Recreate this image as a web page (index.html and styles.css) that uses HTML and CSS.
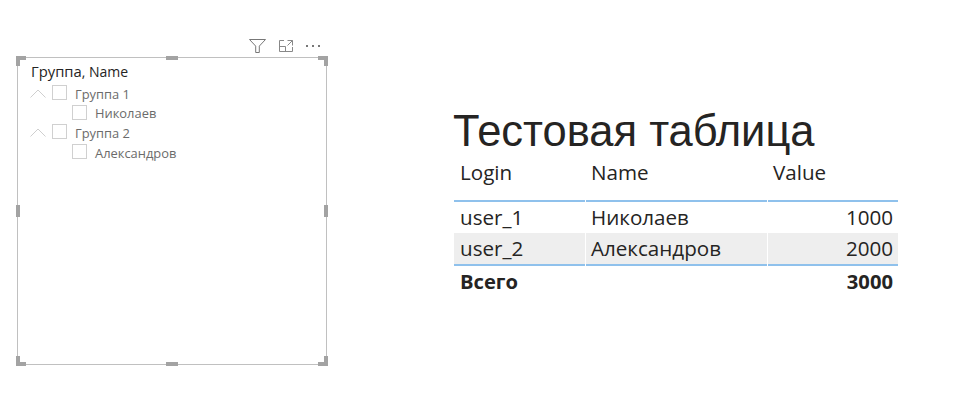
FILE: index.html
```html
<!DOCTYPE html>
<html lang="ru">
<head>
<meta charset="utf-8">
<title>Тестовая таблица</title>
<link rel="stylesheet" href="styles.css">
</head>
<body>
<main class="page">
  <section class="visual">
    <div class="toolbar">
      <svg class="tool" width="20" height="16" viewBox="0 0 20 16"><path d="M1.5 1.5h16l-6.2 6.6v6.4h-3.6V8.1z" fill="none" stroke="#777" stroke-width="1"/></svg>
      <svg class="tool" width="16" height="16" viewBox="0 0 16 16"><path d="M6 2.5H1.5v11h13V9M1.5 8.5h6v5M9.5 2.5h5v5M14.5 2.5l-5 5" fill="none" stroke="#888" stroke-width="1"/></svg>
      <svg class="tool" width="20" height="16" viewBox="0 0 20 16"><g fill="#777"><rect x="2" y="7" width="2" height="2"/><rect x="8" y="7" width="2" height="2"/><rect x="14" y="7" width="2" height="2"/></g></svg>
    </div>
    <div class="slicer">
      <span class="h h-tl-a"></span><span class="h h-tl-b"></span>
      <span class="h h-tr-a"></span><span class="h h-tr-b"></span>
      <span class="h h-bl-a"></span><span class="h h-bl-b"></span>
      <span class="h h-br-a"></span><span class="h h-br-b"></span>
      <span class="h h-t"></span><span class="h h-b"></span>
      <span class="h h-l"></span><span class="h h-r"></span>
      <div class="slicer-title">Группа<span class="comma">, Name</span></div>
      <ul class="tree">
        <li class="group"><svg class="chev" width="16" height="9" viewBox="0 0 16 9"><path d="M.5 8.5L8 1l7.5 7.5" fill="none" stroke="#cfcfcf" stroke-width="1"/></svg><span class="check"></span>Группа 1</li>
        <li class="leaf"><span class="check"></span>Николаев</li>
        <li class="group"><svg class="chev" width="16" height="9" viewBox="0 0 16 9"><path d="M.5 8.5L8 1l7.5 7.5" fill="none" stroke="#cfcfcf" stroke-width="1"/></svg><span class="check"></span>Группа 2</li>
        <li class="leaf"><span class="check"></span>Александров</li>
      </ul>
    </div>
  </section>
  <section class="report">
    <h1 class="report-title">Тестовая таблица</h1>
    <table class="grid">
      <thead>
        <tr><th class="c1">Login</th><th class="c2">Name</th><th class="c3">Value</th></tr>
      </thead>
      <tbody>
        <tr><td>user_1</td><td>Николаев</td><td class="num">1000</td></tr>
        <tr class="alt"><td>user_2</td><td>Александров</td><td class="num">2000</td></tr>
      </tbody>
      <tfoot>
        <tr><td>Всего</td><td></td><td class="num">3000</td></tr>
      </tfoot>
    </table>
  </section>
</main>
</body>
</html>
```

FILE: styles.css
```css
html, body {
  margin: 0;
  padding: 0;
  background: #fff;
}
.page {
  width: 970px;
  height: 403px;
  box-sizing: border-box;
  display: flex;
  align-items: flex-start;
  padding: 37px 0 0 17px;
  overflow: hidden;
  font-family: "Open Sans", "Noto Sans", sans-serif;
}
.visual {
  width: 310px;
  flex: none;
}
.toolbar {
  display: flex;
  justify-content: flex-end;
  align-items: center;
  gap: 10px;
  height: 20px;
  padding: 0 3px 2px 0;
  box-sizing: border-box;
}
.slicer {
  position: relative;
  box-sizing: border-box;
  height: 308px;
  border: 1px solid #c0c0c0;
  padding: 4px 13px;
}
.slicer-title {
  font-size: 14.8px;
  line-height: 19px;
  color: #252423;
}
.comma {
  font-size: 14px;
}
.tree {
  list-style: none;
  margin: 3px 0 0;
  padding: 0;
  font-size: 12.9px;
  color: #6b6b6b;
}
.tree li {
  display: flex;
  align-items: center;
  height: 19.6px;
  white-space: nowrap;
}
.chev {
  margin-left: -1px;
  margin-right: 6px;
  flex: none;
}
.check {
  flex: none;
  box-sizing: border-box;
  width: 15px;
  height: 15px;
  border: 1px solid #d0d0d0;
  margin-right: 8px;
  position: relative;
  top: -1px;
}
.leaf {
  padding-left: 41px;
}
.h {
  position: absolute;
  background: #a3a3a3;
}
.h-tl-a, .h-bl-a { left: -2px; width: 10px; height: 4px; }
.h-tl-b, .h-bl-b { left: -2px; width: 4px; height: 10px; }
.h-tr-a, .h-br-a { right: -2px; width: 10px; height: 4px; }
.h-tr-b, .h-br-b { right: -2px; width: 4px; height: 10px; }
.h-tl-a, .h-tl-b, .h-tr-a, .h-tr-b { top: -2px; }
.h-bl-a, .h-bl-b, .h-br-a, .h-br-b { bottom: -2px; }
.h-t, .h-b { left: 148px; width: 12px; height: 4px; }
.h-t { top: -2px; }
.h-b { bottom: -2px; }
.h-l, .h-r { top: 147px; width: 4px; height: 12px; }
.h-l { left: -2px; }
.h-r { right: -2px; }
.report {
  width: 444px;
  margin: 70px 0 0 127px;
  flex: none;
}
.report-title {
  margin: 0 0 0 -1px;
  font: 400 43.5px/49px "Liberation Sans", Arial, sans-serif;
  color: #252423;
  white-space: nowrap;
}
.grid {
  width: 444px;
  border-collapse: separate;
  border-spacing: 0;
  table-layout: fixed;
  font-size: 20.6px;
  color: #252423;
}
.grid th, .grid td {
  padding: 0 5px 0 6px;
  height: 31px;
  line-height: 27px;
  font-weight: 400;
  text-align: left;
  box-sizing: border-box;
  white-space: nowrap;
}
.grid th {
  height: 46px;
  vertical-align: top;
  padding-top: 3px;
  border-bottom: 2px solid #8fc1ec;
}
.c1 { width: 131px; }
.c2 { width: 182px; }
.c3 { width: 131px; }
.grid .num { text-align: right; }
.alt td {
  background: #eee;
  border-bottom: 2px solid #8fc1ec;
  height: 33px;
}
.grid th + th, .alt td + td {
  position: relative;
}
.grid th + th::after, .alt td + td::after {
  content: "";
  position: absolute;
  left: 0;
  top: 0;
  bottom: -2px;
  width: 1px;
  background: #fff;
}
.grid tfoot td {
  font-weight: 700;
  font-size: 20.2px;
}
```
